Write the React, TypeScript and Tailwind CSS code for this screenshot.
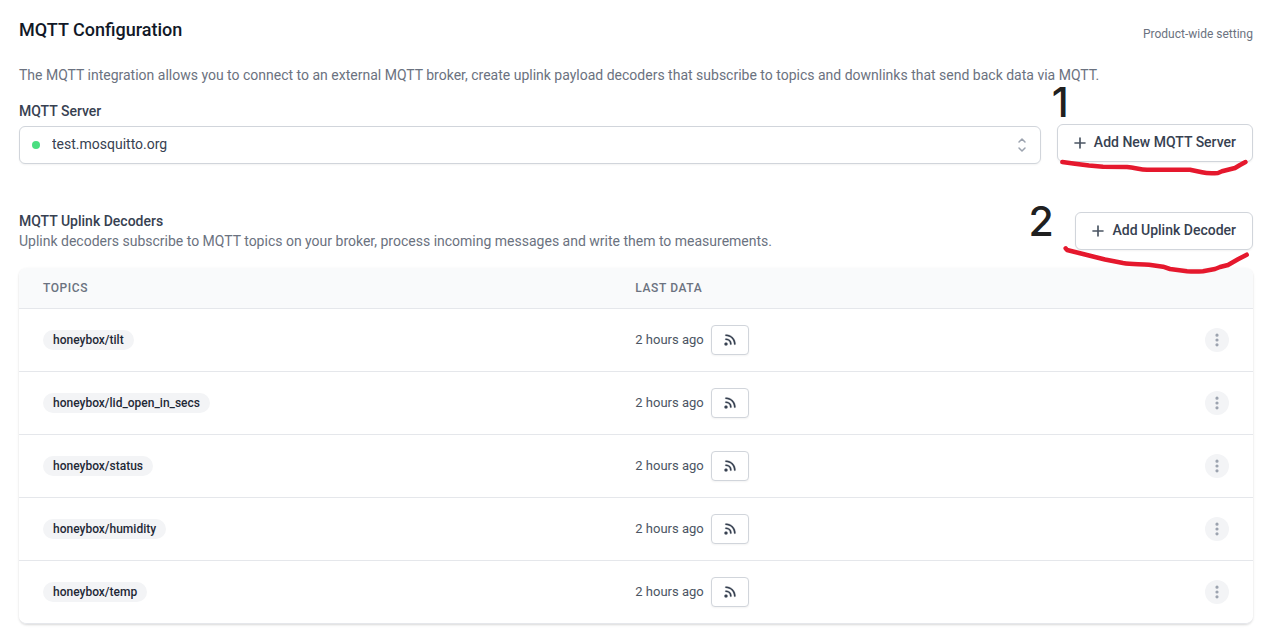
import { HiDotsVertical, HiRss } from "react-icons/hi";

const topics = [
  "honeybox/tilt",
  "honeybox/lid_open_in_secs",
  "honeybox/status",
  "honeybox/humidity",
  "honeybox/temp",
];

function PlusIcon() {
  return (
    <svg className="-ml-1 mr-1 size-5 text-[#4b5563]" viewBox="0 0 24 24" fill="none" stroke="currentColor" strokeWidth="2" strokeLinecap="round" aria-hidden="true">
      <path d="M12 6v12m6-6H6" />
    </svg>
  );
}

function AddButton({ label }: { label: string }) {
  return (
    <button type="button" className="flex items-center whitespace-nowrap rounded-md border border-[#d1d5db] bg-white px-4 py-[7px] text-sm font-medium text-[#374151] shadow-xs">
      <PlusIcon />
      <span className="pb-0.5">{label}</span>
    </button>
  );
}

function Underline({ d }: { d: string }) {
  return (
    <svg className="pointer-events-none absolute right-0 top-0 h-16 w-[200px]" viewBox="0 0 200 64" fill="none" stroke="#e5182d" strokeWidth="4.5" strokeLinecap="round" strokeLinejoin="round" aria-hidden="true">
      <path d={d} />
    </svg>
  );
}

export default function App() {
  return (
    <main className="bg-white pb-4 pl-[19px] pr-[18px] pt-4 font-['Roboto',sans-serif]">
      <header className="flex items-center justify-between">
        <h1 className="text-lg leading-7 font-medium text-[#111827]">MQTT Configuration</h1>
        <p className="pt-2 text-xs text-[#6b7280]">Product-wide setting</p>
      </header>

      <p className="mt-[21px] text-sm text-[#6b7280]">
        The MQTT integration allows you to connect to an external MQTT broker, create uplink payload decoders that subscribe to topics and downlinks that send back data via MQTT.
      </p>

      <section className="mt-4 flex items-end gap-4">
        <div className="min-w-0 flex-1">
          <label htmlFor="server" className="block text-sm font-medium text-[#374151]">MQTT Server</label>
          <div className="relative mt-[5px]">
            <select id="server" className="block h-[38px] w-full appearance-none rounded-md border border-[#d1d5db] bg-white pb-0.5 pl-8 pr-10 text-sm text-[#374151] shadow-xs">
              <option>test.mosquitto.org</option>
            </select>
            <span className="pointer-events-none absolute inset-y-0 left-3 flex items-center pl-px">
              <span className="size-2 rounded-full bg-[#4ade80]" />
            </span>
            <span className="pointer-events-none absolute inset-y-0 right-2 flex items-center pr-px">
              <svg className="size-5 text-[#9ca3af]" viewBox="0 0 20 20" fill="none" stroke="currentColor" strokeWidth="1.5" strokeLinecap="round" strokeLinejoin="round" aria-hidden="true">
                <path d="M7 7l3-3 3 3m0 6l-3 3-3-3" />
              </svg>
            </span>
          </div>
        </div>
        <div className="relative mb-0.5">
          <AddButton label="Add New MQTT Server" />
          <span className="absolute -top-[38px] -left-[5px] font-['Inter',sans-serif] text-[41px] leading-8 font-medium text-[#202020]">1</span>
          <Underline d="M9.3 38L22 39.7L36 41.5L50 42.7L74 43C82 43.8 87 45.3 94 45.8L137 45.8L149 48.3C154 49.5 159 49.5 165 49L169 47.3L182 44L187 41L192.5 38" />
        </div>
      </section>

      <section className="mt-[47px]">
        <div className="flex items-center justify-between gap-4">
          <div>
            <h2 className="text-sm font-medium text-[#374151]">MQTT Uplink Decoders</h2>
            <p className="text-sm text-[#6b7280]">
              Uplink decoders subscribe to MQTT topics on your broker, process incoming messages and write them to measurements.
            </p>
          </div>
          <div className="relative">
            <AddButton label="Add Uplink Decoder" />
            <span className="absolute -top-[7px] -left-[47px] font-['Inter',sans-serif] text-[41px] leading-8 font-medium text-[#202020]">2</span>
            <Underline d="M12.7 36.3L14 38L22 40L37 43.7L52 47.5L70 51C79 52.5 87 51.8 96 52.7L110 54.7L117 57L134 59.2Q142 60 150 59.2L162 57L167 55L175 53L185 47.3L193.7 42.7" />
          </div>
        </div>

        <div className="mt-[17px] overflow-hidden rounded-lg border-b border-[#e5e7eb] shadow-[0_1px_3px_0_rgba(0,0,0,0.1),0_1px_2px_0_rgba(0,0,0,0.06)]">
          <table className="w-full text-left">
            <thead className="bg-[#f9fafb]">
              <tr className="border-b border-[#e5e7eb] text-xs tracking-wider text-[#6b7280] uppercase">
                <th scope="col" className="w-[48%] px-6 py-3 font-medium">Topics</th>
                <th scope="col" className="px-6 py-3 font-medium">Last data</th>
                <th scope="col" aria-label="Actions" className="w-[72px]" />
              </tr>
            </thead>
            <tbody className="divide-y divide-[#e5e7eb] bg-white">
              {topics.map((topic) => (
                <tr key={topic}>
                  <td className="px-6 py-4">
                    <span className="flex w-fit rounded-full bg-[#f3f4f6] px-2.5 py-0.5 text-xs font-medium text-[#1f2937]">{topic}</span>
                  </td>
                  <td className="px-6 py-4">
                    <div className="flex items-center gap-[7px] text-[13px] text-[#4b5563]">
                      2 hours ago
                      <button type="button" aria-label={`Show live data for ${topic}`} className="flex h-[30px] w-[38px] items-center justify-center rounded-sm border border-[#d1d5db] bg-white text-[#374151] shadow-xs">
                        <HiRss className="size-4" strokeWidth={0.25} />
                      </button>
                    </div>
                  </td>
                  <td className="px-6 py-4">
                    <button type="button" aria-label={`Actions for ${topic}`} className="flex size-6 items-center justify-center rounded-full bg-[#f3f4f6] text-[#9ca3af]">
                      <HiDotsVertical className="size-4" />
                    </button>
                  </td>
                </tr>
              ))}
            </tbody>
          </table>
        </div>
      </section>
    </main>
  );
}
